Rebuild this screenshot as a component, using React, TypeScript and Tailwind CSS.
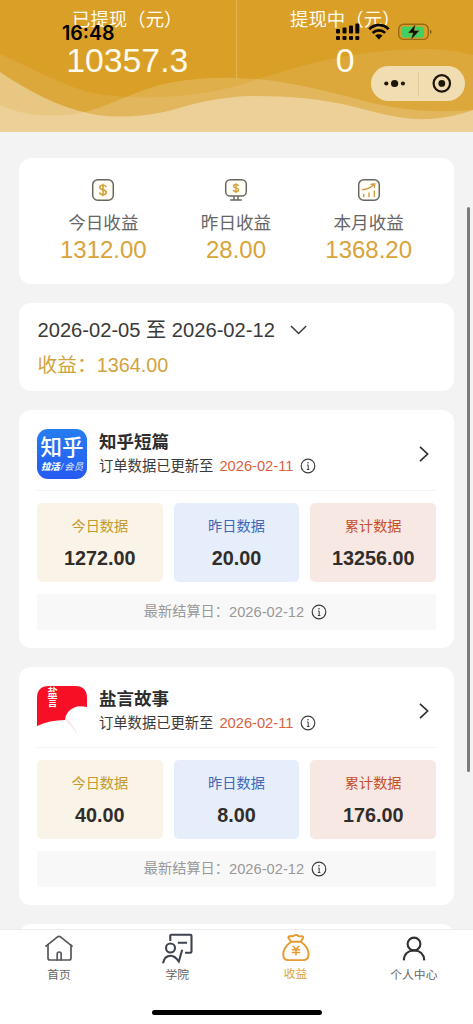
import type { ReactNode } from "react";

const SANS = "font-['Liberation_Sans','Noto_Sans_CJK_SC',sans-serif]";

type Product = {
	name: string;
	logo: ReactNode;
	updated: string;
	today: string;
	yesterday: string;
	total: string;
	settled: string;
};

function Waves() {
	return (
		<svg className="absolute inset-0" width="473" height="132" viewBox="0 0 473 132" fill="#fff">
			<path
				opacity=".1"
				d="M0 54C28 66 58 84 92 93C135 101 190 98 237 86C290 69 345 49 430 49Q455 50 473 55V132H0Z"
			/>
			<path
				opacity=".36"
				d="M0 72C28 91 58 107 92 114C118 119 148 116 172 110C195 103 220 97 250 96C285 96 320 98 355 107C385 115 405 120 430 119Q455 117 473 110V132H0Z"
			/>
			<path
				opacity=".17"
				d="M0 105C25 117 55 118 85 112C115 104 130 93 160 85C180 80 205 77 237 78C280 79 315 89 350 97C390 109 430 114 473 110V132H0Z"
			/>
		</svg>
	);
}

function StatusBar() {
	return (
		<div className="absolute inset-x-0 top-0 z-10 h-[102px]">
			<span className="absolute left-[62px] top-[21px] font-['Inter',sans-serif] text-[19.6px] font-semibold leading-6 text-black">
				16:48
			</span>
			<svg className="absolute left-[335px] top-[22px]" width="98" height="20" viewBox="0 0 98 20">
				{/* dual sim signal */}
				<g fill="#0c0800">
					<rect x="1" y="7" width="4" height="4.5" rx="1" />
					<rect x="7.5" y="5.5" width="4" height="6" rx="1" />
					<rect x="14" y="3.5" width="4" height="8" rx="1" />
					<rect x="20.3" y="1.5" width="4" height="10" rx="1" />
					<rect x="1" y="14" width="4" height="4" rx="1" />
					<rect x="7.5" y="14" width="4" height="4" rx="1" />
					<rect x="14" y="14" width="4" height="4" rx="1" />
					<rect x="20.3" y="14" width="4" height="4" rx="1" />
				</g>
				<g fill="none" stroke="#0c0800" strokeWidth="2.7">
					<path d="M34.2 7.2C39.5 1.8 48.5 1.8 53.6 7.2" />
					<path d="M37.6 10.9C41.3 7.4 46.6 7.4 50.2 10.9" />
				</g>
				<path d="M40.2 13.6Q43.9 10.8 47.6 13.6L43.9 17.4Z" fill="#0c0800" />
				<rect x="63.7" y="2.2" width="29.6" height="15.2" rx="5" fill="none" stroke="#9a6a10" strokeWidth="1.4" />
				<rect x="66" y="4.4" width="23" height="11" rx="3" fill="#3fd163" />
				<path d="M95 7.5Q98 9.8 95 12.2Z" fill="#7d5a18" />
				<path
					d="M80.6 2L73 11H78L75.8 18L84.5 8.6H79.2Z"
					fill="#100c00"
					stroke="#9c9a30"
					strokeWidth=".5"
				/>
			</svg>
			<div className="absolute left-[371px] top-[66px] flex h-[35px] w-[94px] items-center rounded-full bg-[#f0ddb1]">
				<svg width="94" height="35" viewBox="0 0 94 35" fill="#1d150a">
					<circle cx="15.3" cy="17.5" r="2.1" />
					<circle cx="23.6" cy="17.5" r="3.6" />
					<circle cx="31.9" cy="17.5" r="2.1" />
					<path d="M47.5 6V30" stroke="#e0ca99" strokeWidth="1" />
					<circle cx="70.8" cy="17.4" r="8.2" fill="none" stroke="#1d150a" strokeWidth="2.2" />
					<circle cx="70.8" cy="17.4" r="3.4" />
				</svg>
			</div>
		</div>
	);
}

function Header() {
	return (
		<header className="relative h-[132px] shrink-0 bg-[#d99f26] px-[19px] text-[#fffbee]">
			<Waves />
			<div className="relative grid h-[77px] grid-cols-2 text-center">
				<div className="border-r border-[#e3b552]">
					<p className="mt-[7px] text-[18.4px] leading-[26px]">已提现（元）</p>
					<p className="mt-[7px] text-[33.8px] leading-10">10357.3</p>
				</div>
				<div>
					<p className="mt-[7px] text-[18.4px] leading-[26px]">提现中（元）</p>
					<p className="mt-[7px] text-[33.8px] leading-10">0</p>
				</div>
			</div>
		</header>
	);
}

function TodayIcon() {
	return (
		<svg width="24" height="24" viewBox="0 0 24 24" fill="none">
			<rect x="1.7" y="1.7" width="20.6" height="20.6" rx="5" fill="#fffdf6" stroke="#696660" strokeWidth="1.5" />
			<path
				d="M15.2 9.2C14.9 7.8 13.7 7.3 12 7.3C10.1 7.3 8.8 8.1 8.8 9.6C8.8 12.7 15.3 11 15.3 14.2C15.3 15.8 13.9 16.6 12 16.6C10.2 16.6 8.8 15.9 8.6 14.4M12 5.7V18.2"
				stroke="#d3a33f"
				strokeWidth="1.6"
			/>
		</svg>
	);
}

function YesterdayIcon() {
	return (
		<svg width="24" height="24" viewBox="0 0 24 24" fill="none">
			<rect x="1.7" y="1.7" width="20.6" height="16.4" rx="4.6" fill="#fffdf6" stroke="#696660" strokeWidth="1.5" />
			<path d="M10 18.5V21.5M14 18.5V21.5M6.2 22H17.8" stroke="#696660" strokeWidth="1.5" />
			<path
				d="M14.5 8C14.2 6.9 13.3 6.5 12 6.5C10.5 6.5 9.6 7.1 9.6 8.2C9.6 10.6 14.6 9.2 14.6 11.8C14.6 13 13.5 13.6 12 13.6C10.6 13.6 9.5 13.1 9.3 11.9M12 5.2V14.9"
				stroke="#d3a33f"
				strokeWidth="1.4"
			/>
		</svg>
	);
}

function MonthIcon() {
	return (
		<svg width="24" height="24" viewBox="0 0 24 24" fill="none">
			<rect x="1.7" y="1.7" width="20.6" height="20.6" rx="5" fill="#fffdf6" stroke="#696660" strokeWidth="1.5" />
			<path
				d="M5.2 11.8C10 11.6 13.5 10 17 6.6M13.4 6.4L17.7 5.9L17.4 10M6.7 16V19M12 14.5V19M17.3 12.5V19"
				stroke="#cda04b"
				strokeWidth="1.4"
			/>
		</svg>
	);
}

const stats = [
	{ label: "今日收益", value: "1312.00", icon: <TodayIcon /> },
	{ label: "昨日收益", value: "28.00", icon: <YesterdayIcon /> },
	{ label: "本月收益", value: "1368.20", icon: <MonthIcon /> },
];

function InfoIcon() {
	return (
		<svg className="shrink-0" width="16" height="16" viewBox="0 0 16 16" fill="none" stroke="#3d3d3d">
			<circle cx="8" cy="8" r="6.8" strokeWidth="1.2" />
			<path d="M7 7H8.2V11.5M6.9 11.5H9.4" strokeWidth="1" />
			<circle cx="8" cy="4.8" r=".8" fill="#3d3d3d" stroke="none" />
		</svg>
	);
}

function ZhihuLogo() {
	return (
		<div className="flex h-[50px] w-[50px] shrink-0 flex-col items-center overflow-hidden rounded-[11px] bg-linear-to-b from-[#267df0] to-[#2859f3] text-white">
			<p className="mt-[7px] whitespace-nowrap text-[21.5px] font-medium leading-6">知乎</p>
			<p className="mt-px flex whitespace-nowrap text-[9.4px] italic leading-3">
				<span className="font-black">拉活</span>
				<span className="px-px opacity-70">/</span>
				<span className="opacity-90">会员</span>
			</p>
		</div>
	);
}

function YanyanLogo() {
	return (
		<div className="relative h-[50px] w-[50px] shrink-0">
			<svg width="50" height="50" viewBox="0 0 50 50">
				<path
					d="M0 40V12Q0 0 12 0H38Q50 0 50 12V21Q38 18 31 26Q28 30 28 34Q12 34 0 40Z"
					fill="#f70f25"
				/>
				<path d="M28 34L31 33Q36 39 42 50Q36 42 28 34Z" fill="#fae9eb" />
			</svg>
			<p className="absolute left-[10.5px] top-[2px] w-[10px] text-center text-[10px] font-bold leading-[9.5px] text-white">
				盐言
			</p>
		</div>
	);
}

const products: Product[] = [
	{
		name: "知乎短篇",
		logo: <ZhihuLogo />,
		updated: "2026-02-11",
		today: "1272.00",
		yesterday: "20.00",
		total: "13256.00",
		settled: "2026-02-12",
	},
	{
		name: "盐言故事",
		logo: <YanyanLogo />,
		updated: "2026-02-11",
		today: "40.00",
		yesterday: "8.00",
		total: "176.00",
		settled: "2026-02-12",
	},
];

function Tile({ label, value, className }: { label: string; value: string; className: string }) {
	return (
		<div className={`flex h-[79px] flex-col items-center rounded-[5px] pt-3 ${className}`}>
			<p className="text-[14.2px] leading-[22px]">{label}</p>
			<p className="mt-2 text-[19.8px] font-bold leading-[26px] text-[#302d2b]">{value}</p>
		</div>
	);
}

function ProductCard({ product }: { product: Product }) {
	return (
		<section className="h-[238px] shrink-0 rounded-xl bg-white px-[18px] pt-[19px]">
			<div className="flex h-[62px] items-start border-b border-[#f3f3f3]">
				{product.logo}
				<div className="ml-3 flex-1">
					<h2 className="mt-px text-[17.5px] font-bold leading-6 text-[#2d2d2d]">{product.name}</h2>
					<p className="flex items-center whitespace-nowrap text-[14.3px] leading-6 text-[#3a3a3a]">
						订单数据已更新至
						<span className="ml-1.5 mr-[7px] text-[14.7px] text-[#dc623f]">{product.updated}</span>
						<InfoIcon />
					</p>
				</div>
				<svg className="mr-1.5 mt-[15.5px]" width="12" height="18" viewBox="0 0 12 18" fill="none">
					<path d="M2 1.8L9.6 9L2 16.2" stroke="#303030" strokeWidth="1.7" />
				</svg>
			</div>
			<div className="mt-3 grid grid-cols-3 gap-[11px]">
				<Tile label="今日数据" value={product.today} className="bg-[#faf3e7] text-[#c49a2c]" />
				<Tile label="昨日数据" value={product.yesterday} className="bg-[#e7eefb] text-[#3e69b8]" />
				<Tile label="累计数据" value={product.total} className="bg-[#f8e8e3] text-[#c64e2d]" />
			</div>
			<div className="mt-3 flex h-9 items-center justify-center bg-[#f9f8f8] pr-0.5 text-[14.2px] text-[#999]">
				最新结算日：
				<span className="mr-[7px] text-[14.7px]">{product.settled}</span>
				<InfoIcon />
			</div>
		</section>
	);
}

const tabs = [
	{
		label: "首页",
		color: "text-[#666]",
		icon: (
			<svg width="32" height="32" viewBox="0 0 32 32" fill="none" stroke="#56575b" strokeWidth="1.7" strokeLinejoin="round" strokeLinecap="round">
				<path d="M3 13.2L14.5 3.9Q16 2.8 17.5 3.9L29 13.2" />
				<path d="M5 12V25Q5 27 7 27H26Q28 27 28 25V12" />
				<path d="M14.2 27V21Q14.2 19 16.2 19Q18.2 19 18.2 21V27" />
			</svg>
		),
	},
	{
		label: "学院",
		color: "text-[#666]",
		icon: (
			<svg width="32" height="32" viewBox="0 0 32 32" fill="none" stroke="#3e4350" strokeWidth="2.1">
				<path d="M9.3 8V2.8Q9.3 1.8 10.3 1.8H29.5Q30.5 1.8 30.5 2.8V18.5Q30.5 19.8 29.3 19.8H24M16.8 9.7H26" />
				<circle cx="9.5" cy="15" r="4.5" />
				<path d="M2 30.2C3 24.5 6 22.7 9.7 22.7C13.5 22.7 15 25 17.8 28.5L21.2 16.8" />
			</svg>
		),
	},
	{
		label: "收益",
		color: "text-[#dda63f] -translate-y-px",
		icon: (
			<svg width="32" height="32" viewBox="0 0 32 32" fill="none" stroke="#e49a2c" strokeWidth="1.9" strokeLinejoin="round">
				<path d="M11.2 8.7L8.6 5.1Q7.8 3.5 9.6 3.1L13 3.3Q15.8 .7 18.6 3.1Q20 3.7 21.6 3.1Q23.7 3.2 22.8 5.2L20.8 8.7C25.5 12 29 16.5 28.5 22Q28.4 27.1 22.8 27.1H8.7Q3.4 27.1 3.3 22C3 16.5 6.5 12 11.2 8.7ZM11.2 8.7H20.8" />
				<path d="M12.7 12.8L16 16.5L19.3 12.8M16 16.5V22.5M11.8 16.7H20.2M11.8 19.4H20.2" strokeWidth="1.5" />
			</svg>
		),
	},
	{
		label: "个人中心",
		color: "text-[#666]",
		icon: (
			<svg width="32" height="32" viewBox="0 0 32 32" fill="none" stroke="#303034" strokeWidth="2.1">
				<circle cx="16" cy="11" r="6.4" />
				<path d="M5.8 27.4C6.2 21.2 10 17.5 16 17.5S25.8 21.2 26.3 27.4" />
			</svg>
		),
	},
];

function TabBar() {
	return (
		<nav className="relative h-[95px] shrink-0 border-t border-[#ededed] bg-white">
			<div className="grid grid-cols-4 pt-[3px]">
				{tabs.map((tab) => (
					<div key={tab.label} className="flex flex-col items-center">
						{tab.icon}
						<span className={`mt-0.5 text-[11.8px] leading-4 ${tab.color}`}>{tab.label}</span>
					</div>
				))}
			</div>
			{/* home indicator */}
			<div className="mx-auto mt-[27px] h-[5px] w-[170px] rounded-full bg-black" />
		</nav>
	);
}

export default function App() {
	return (
		<div className={`relative flex h-screen w-full flex-col overflow-hidden bg-[#f3f3f3] ${SANS}`}>
			<StatusBar />
			<Header />
			<main className="flex min-h-0 flex-1 flex-col gap-[19px] overflow-hidden px-[19px] pt-[26px]">
				<section className="grid h-[126px] shrink-0 grid-cols-3 rounded-xl bg-white pl-[18px] pr-[19px] pt-[19.5px]">
					{stats.map((stat) => (
						<div key={stat.label} className="flex flex-col items-center">
							{stat.icon}
							<p className="mt-[9px] text-[17.6px] leading-6 text-[#666]">{stat.label}</p>
							<p className="-mt-px text-[24px] leading-8 text-[#d8a338]">{stat.value}</p>
						</div>
					))}
				</section>

				<section className="h-[88px] shrink-0 rounded-xl bg-white pl-[18.5px] pt-[13px]">
					<div className="flex items-center text-[20.15px] leading-7 text-[#3a3a3a]">
						2026-02-05 至 2026-02-12
						<svg className="ml-3.5" width="20" height="14" viewBox="0 0 20 14" fill="none">
							<path d="M2 3L9.6 10.5L17.2 3" stroke="#3a3a3a" strokeWidth="1.5" />
						</svg>
					</div>
					<p className="mt-[7px] text-[19.8px] leading-7 text-[#d0a43d]">收益：1364.00</p>
				</section>

				{products.map((product) => (
					<ProductCard key={product.name} product={product} />
				))}

				<section className="h-[238px] shrink-0 rounded-xl bg-white" />
			</main>
			<TabBar />
			{/* scroll position */}
			<div className="absolute right-[3px] top-[207px] h-[565px] w-[3.5px] rounded-full bg-[#7c7c7c]" />
		</div>
	);
}
